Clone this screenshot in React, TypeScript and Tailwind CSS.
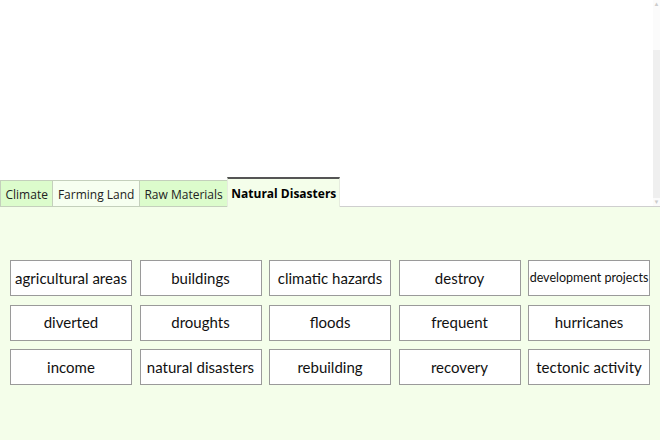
import React, { useState } from "react";

const TABS = ["Climate", "Farming Land", "Raw Materials", "Natural Disasters"];

const WORDS = [
  "agricultural areas",
  "buildings",
  "climatic hazards",
  "destroy",
  "development projects",
  "diverted",
  "droughts",
  "floods",
  "frequent",
  "hurricanes",
  "income",
  "natural disasters",
  "rebuilding",
  "recovery",
  "tectonic activity",
];

export default function App() {
  const [active, setActive] = useState(3);

  return (
    <div className="w-[660px] h-[440px] flex flex-col bg-white overflow-hidden">
      {/* Top area with tabs */}
      <div className="h-[207px] flex flex-col relative">
        <div className="flex-1" />
        <div className="flex items-end" style={{ fontFamily: '"Open Sans", "Noto Sans", sans-serif' }}>
          {TABS.map((tab, i) => {
            const isActive = i === active;
            if (isActive) {
              return (
                <button
                  key={tab}
                  onClick={() => setActive(i)}
                  className="h-[30px] px-[3px] pt-[1px] border-t-2 border-t-[#555] border-x border-x-[#e6ecdf] bg-[#f4feea] text-[12px] font-bold text-black leading-none"
                >
                  {tab}
                </button>
              );
            }
            return (
              <button
                key={tab}
                onClick={() => setActive(i)}
                className={`h-[27px] px-[4.5px] pt-[2px] border border-[#c4d0bc] -mr-px text-[12px] text-[#222] leading-none ${
                  i === 1 ? "bg-[#f6fff0]" : "bg-[#dcfccc]"
                }`}
              >
                {tab}
              </button>
            );
          })}
          <div className="flex-1 border-b border-[#cfcfcf]" />
        </div>
        {/* scrollbar */}
        <div className="absolute right-0 top-0 w-[7px] h-[206px] bg-[#fbfbfb] flex flex-col">
          <div className="h-[8px] text-[6px] leading-[8px] text-center text-[#ccc]">▲</div>
          <div className="mt-[42px] flex-1 bg-[#efefef]" />
          <div className="h-[8px] text-[6px] leading-[8px] text-center text-[#ccc]">▼</div>
        </div>
      </div>

      {/* Panel */}
      <div className="flex-1 bg-[#f4feea] pt-[53px] pl-[10px]">
        <div
          className="grid grid-cols-[repeat(5,122px)] gap-x-[7.5px] gap-y-[8.5px]"
          style={{ fontFamily: 'Lato, "Open Sans", sans-serif' }}
        >
          {WORDS.map((w) => (
            <div
              key={w}
              className={`h-[36px] bg-white border border-[#9a9a9a] flex items-center justify-center whitespace-nowrap text-[#111] ${
                w === "development projects" ? "text-[12.5px]" : "text-[15px]"
              }`}
            >
              {w}
            </div>
          ))}
        </div>
      </div>
    </div>
  );
}
